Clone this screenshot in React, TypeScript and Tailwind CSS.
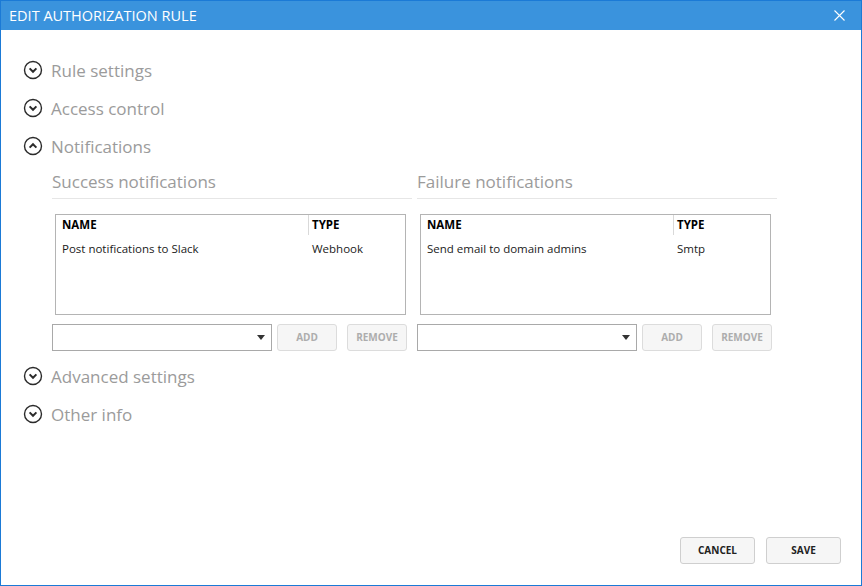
import React from "react";

const font = { fontFamily: '"Open Sans", "Noto Sans", sans-serif' };

function Chevron({ up }: { up?: boolean }) {
  return (
    <svg width="20" height="20" viewBox="0 0 20 20" className="shrink-0">
      <circle cx="10" cy="10" r="8.5" fill="none" stroke="#2b2b2b" strokeWidth="1.4" />
      {up ? (
        <path d="M6.6 11.6 L10 8.2 L13.4 11.6" fill="none" stroke="#2b2b2b" strokeWidth="2" />
      ) : (
        <path d="M6.6 8.4 L10 11.8 L13.4 8.4" fill="none" stroke="#2b2b2b" strokeWidth="2" />
      )}
    </svg>
  );
}

function Section({ label, up }: { label: string; up?: boolean }) {
  return (
    <div className="flex h-[38px] items-center gap-[8px]">
      <Chevron up={up} />
      <span className="text-[17px] text-[#9b9b9b] leading-none">{label}</span>
    </div>
  );
}

function NotifPanel({ title, name, type }: { title: string; name: string; type: string }) {
  return (
    <div className="flex w-[360px] flex-col">
      <div className="h-[28px] border-b border-[#e6e6e6] text-[17px] leading-[22px] text-[#9b9b9b]">{title}</div>
      <div className="ml-[3px] mt-[15px] h-[101px] w-[351px] border border-[#b4b4b4] bg-white">
        <div className="flex h-[20px] text-[11.5px] font-bold text-black">
          <div className="flex w-[253px] items-center border-r border-[#d9d9d9] pl-[6px]">NAME</div>
          <div className="flex items-center pl-[3px]">TYPE</div>
        </div>
        <div className="mt-[5px] flex text-[11.5px] text-[#1a1a1a]">
          <div className="w-[256px] pl-[6px]">{name}</div>
          <div>{type}</div>
        </div>
      </div>
      <div className="mt-[9px] flex">
        <div className="flex h-[27px] w-[220px] items-center justify-end border border-[#a9a9a9] bg-white pr-[6px]">
          <svg width="8" height="5" viewBox="0 0 8 5">
            <path d="M0 0 L8 0 L4 5 Z" fill="#333" />
          </svg>
        </div>
        <button className="ml-[5px] h-[27px] w-[60px] rounded-[3px] border border-[#dcdcdc] bg-[#f6f6f6] text-[10px] font-bold text-[#adadad]">
          ADD
        </button>
        <button className="ml-[10px] h-[27px] w-[60px] rounded-[3px] border border-[#dcdcdc] bg-[#f6f6f6] text-[10px] font-bold text-[#adadad]">
          REMOVE
        </button>
      </div>
    </div>
  );
}

export default function App() {
  return (
    <div className="flex h-[586px] w-[862px] flex-col border border-[#1b7ad6] bg-white" style={font}>
      <div className="flex h-[29px] items-center justify-between bg-[#3a93dd] pl-[8px] pr-[16px]">
        <span className="text-[14.5px] text-white">EDIT AUTHORIZATION RULE</span>
        <svg width="11" height="11" viewBox="0 0 11 11">
          <path d="M0.5 0.5 L10.5 10.5 M10.5 0.5 L0.5 10.5" stroke="#fff" strokeWidth="1.1" />
        </svg>
      </div>
      <div className="flex flex-1 flex-col pl-[22px] pt-[21px]">
        <Section label="Rule settings" />
        <Section label="Access control" />
        <Section label="Notifications" up />
        <div className="ml-[29px] flex gap-[5px] pt-[6px]">
          <NotifPanel title="Success notifications" name="Post notifications to Slack" type="Webhook" />
          <NotifPanel title="Failure notifications" name="Send email to domain admins" type="Smtp" />
        </div>
        <div className="mt-[6px]">
          <Section label="Advanced settings" />
          <Section label="Other info" />
        </div>
      </div>
      <div className="flex justify-end gap-[11px] pb-[21px] pr-[20px]">
        <button className="h-[27px] w-[75px] rounded-[3px] border border-[#cfcfcf] bg-[#f6f6f6] text-[10px] font-bold text-[#222]">
          CANCEL
        </button>
        <button className="h-[27px] w-[75px] rounded-[3px] border border-[#cfcfcf] bg-[#f6f6f6] text-[10px] font-bold text-[#222]">
          SAVE
        </button>
      </div>
    </div>
  );
}
